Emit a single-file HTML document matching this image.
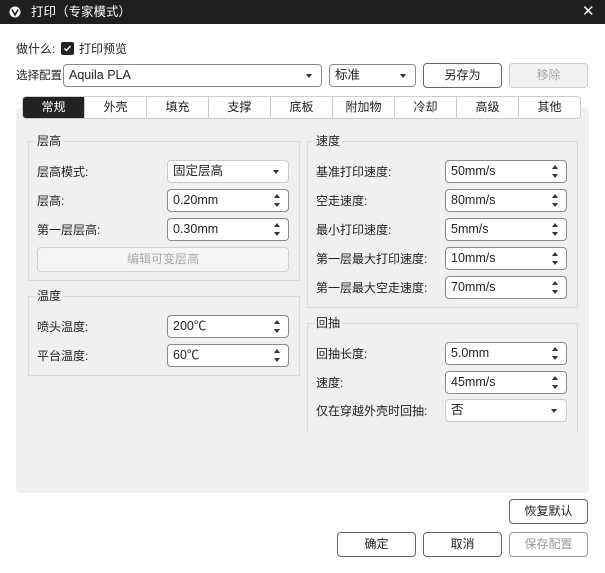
<!DOCTYPE html>
<html><head><meta charset="utf-8"><style>
*{box-sizing:border-box;margin:0;padding:0}
body{width:605px;height:573px;background:#fff;font-family:"Liberation Sans","Noto Sans CJK SC",sans-serif;font-size:12px;color:#222;position:relative;overflow:hidden}
.a{position:absolute}
.title{left:0;top:0;width:605px;height:24px;background:#1f1f1f;color:#fff}
.box{position:absolute;border:1px solid #8a8a8a;border-radius:4px;background:#fff;height:23px;line-height:21px;padding-left:5px;font-size:12.5px}
.dd::after{content:"";position:absolute;right:9px;top:9px;border-left:3.5px solid transparent;border-right:3.5px solid transparent;border-top:4px solid #333}
.sp::before{content:"";position:absolute;right:8px;top:4px;border-left:3.5px solid transparent;border-right:3.5px solid transparent;border-bottom:4px solid #333}
.sp::after{content:"";position:absolute;right:8px;top:13px;border-left:3.5px solid transparent;border-right:3.5px solid transparent;border-top:4px solid #333}
.cb{border-color:#ccc}
.btn{position:absolute;border:1px solid #666;border-radius:4px;background:#fff;text-align:center;height:25px;line-height:23px;font-size:12px}
.dis{border-color:#ccc;background:#f2f2f2;color:#aaa}
.grp{position:absolute;border:1px solid #dadada}
.gt{position:absolute;background:#f0f0f0;padding:0 2px;top:-9px;left:6px;font-size:12px;line-height:16px}
.lbl{position:absolute;font-size:12px;line-height:16px}
.tabs{left:22px;top:96px;width:559px;height:23px;border:1px solid #ccc;border-radius:4px;display:flex;background:#fff;overflow:hidden}
.tabs div{flex:1;text-align:center;line-height:21px;border-left:1px solid #ccc;font-size:12px}
.tabs div:first-child{border-left:none;background:#222;color:#fff}
</style></head><body>
<div class="a title">
<svg class="a" style="left:9px;top:6px" width="12" height="12" viewBox="0 0 12 12"><circle cx="6" cy="6" r="5.5" fill="#fff"/><path d="M3 3.5L6 9 9 3.5" fill="none" stroke="#1f1f1f" stroke-width="1.6"/></svg>
<div class="a" style="left:31px;top:4px;font-size:12.5px;line-height:16px">打印（专家模式）</div>
<div class="a" style="left:582px;top:2px;font-size:15px">✕</div>
</div>
<div class="lbl" style="left:16px;top:41px">做什么:</div>
<div class="a" style="left:61px;top:42px;width:13px;height:13px;background:#222;border-radius:2px"><svg width="13" height="13"><path d="M3.5 6.5l2 2 4-4.5" stroke="#fff" stroke-width="1.4" fill="none"/></svg></div>
<div class="lbl" style="left:79px;top:41px">打印预览</div>
<div class="lbl" style="left:16px;top:68px;font-size:11.5px">选择配置:</div>
<div class="box dd" style="left:63px;top:64px;width:259px">Aquila PLA</div>
<div class="box dd" style="left:329px;top:64px;width:87px">标准</div>
<div class="btn" style="left:423px;top:63px;width:79px">另存为</div>
<div class="btn dis" style="left:509px;top:63px;width:79px">移除</div>
<div class="a" style="left:16px;top:108px;width:573px;height:385px;background:#f0f0f0;border-radius:4px"></div>
<div class="a tabs"><div>常规</div><div>外壳</div><div>填充</div><div>支撑</div><div>底板</div><div>附加物</div><div>冷却</div><div>高级</div><div>其他</div></div>

<div class="grp" style="left:28px;top:141px;width:272px;height:140px"><div class="gt">层高</div></div>
<div class="lbl" style="left:37px;top:164px">层高模式:</div><div class="box dd cb" style="left:167px;top:160px;width:122px">固定层高</div>
<div class="lbl" style="left:37px;top:193px">层高:</div><div class="box sp" style="left:167px;top:189px;width:122px">0.20mm</div>
<div class="lbl" style="left:37px;top:222px">第一层层高:</div><div class="box sp" style="left:167px;top:218px;width:122px">0.30mm</div>
<div class="btn dis" style="left:37px;top:247px;width:252px;border-color:#d0d0d0;background:#f5f5f5">编辑可变层高</div>

<div class="grp" style="left:28px;top:296px;width:272px;height:80px"><div class="gt">温度</div></div>
<div class="lbl" style="left:37px;top:319px">喷头温度:</div><div class="box sp" style="left:167px;top:315px;width:122px">200℃</div>
<div class="lbl" style="left:37px;top:348px">平台温度:</div><div class="box sp" style="left:167px;top:344px;width:122px">60℃</div>

<div class="grp" style="left:307px;top:141px;width:271px;height:167px"><div class="gt">速度</div></div>
<div class="lbl" style="left:316px;top:164px">基准打印速度:</div><div class="box sp" style="left:445px;top:160px;width:122px">50mm/s</div>
<div class="lbl" style="left:316px;top:193px">空走速度:</div><div class="box sp" style="left:445px;top:189px;width:122px">80mm/s</div>
<div class="lbl" style="left:316px;top:222px">最小打印速度:</div><div class="box sp" style="left:445px;top:218px;width:122px">5mm/s</div>
<div class="lbl" style="left:316px;top:251px">第一层最大打印速度:</div><div class="box sp" style="left:445px;top:247px;width:122px">10mm/s</div>
<div class="lbl" style="left:316px;top:280px">第一层最大空走速度:</div><div class="box sp" style="left:445px;top:276px;width:122px">70mm/s</div>

<div class="grp" style="left:307px;top:323px;width:271px;height:110px;border-bottom:none"><div class="gt">回抽</div></div>
<div class="lbl" style="left:316px;top:346px">回抽长度:</div><div class="box sp" style="left:445px;top:342px;width:122px">5.0mm</div>
<div class="lbl" style="left:316px;top:375px">速度:</div><div class="box sp" style="left:445px;top:371px;width:122px">45mm/s</div>
<div class="lbl" style="left:316px;top:403px">仅在穿越外壳时回抽:</div><div class="box dd cb" style="left:445px;top:399px;width:122px">否</div>

<div class="btn" style="left:509px;top:499px;width:79px">恢复默认</div>
<div class="btn" style="left:337px;top:532px;width:79px">确定</div>
<div class="btn" style="left:423px;top:532px;width:79px">取消</div>
<div class="btn" style="left:509px;top:532px;width:79px;border-color:#999;color:#999">保存配置</div>
</body></html>
